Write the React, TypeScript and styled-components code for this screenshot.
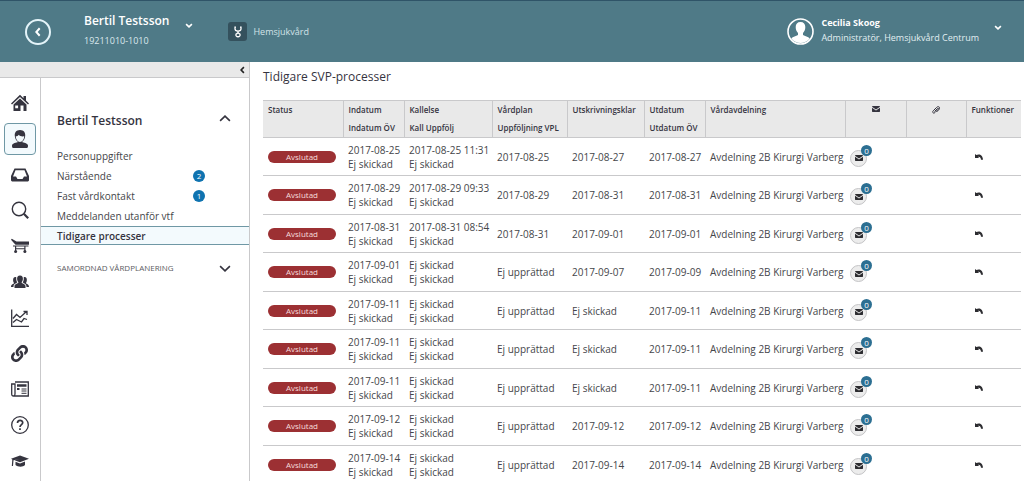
import React from 'react';
import styled, { createGlobalStyle, css } from 'styled-components';
import { FaLink } from 'react-icons/fa';

const GlobalStyle = createGlobalStyle`
  *, *::before, *::after { box-sizing: border-box; }
  body { margin: 0; background: #fff; color: #45464a; font: 10px/14px "Open Sans", "Noto Sans", sans-serif; }
  button { font: inherit; color: inherit; padding: 0; border: 0; background: none; cursor: pointer; }
  a { color: inherit; text-decoration: none; }
  svg { display: block; flex: none; }
`;

const Page = styled.div`
  display: flex;
  flex-direction: column;
  height: 100vh;
  overflow: hidden;
`;

const Header = styled.header`
  display: flex;
  align-items: center;
  flex: none;
  height: 62px;
  padding: 0 22px 0 25px;
  color: #fff;
  background: #4f7a87;
  border-top: 1px solid #2f5468;
`;

const BackButton = styled.button`
  display: grid;
  place-items: center;
  width: 26px;
  height: 26px;
  border: 2px solid #e4f4f9;
  border-radius: 50%;
`;

const Patient = styled.button`
  display: flex;
  align-items: flex-start;
  gap: 16px;
  margin-left: 33px;
  padding-bottom: 4px;
  text-align: left;
  > svg { margin-top: 13px; }
`;

const PatientName = styled.strong`
  display: block;
  font-size: 12px;
  line-height: 22px;
  font-weight: 600;
`;

const PatientId = styled.span`
  display: block;
  font-size: 9px;
  line-height: 18px;
  color: #dbe9ed;
`;

const Unit = styled.div`
  display: flex;
  align-items: center;
  gap: 6px;
  margin-left: 35px;
  font-size: 9px;
  color: #d3e3e8;
`;

const UnitIcon = styled.span`
  display: grid;
  place-items: center;
  width: 19px;
  height: 19px;
  border-radius: 3px;
  color: #fff;
  background: #34515d;
`;

const Account = styled.button`
  display: flex;
  align-items: center;
  gap: 7px;
  margin-left: auto;
  text-align: left;
  > svg:last-child { margin-bottom: 8px; }
`;

const AccountText = styled.span`
  font-size: 9px;
  line-height: 15px;
  margin-right: 8px;
  padding-bottom: 4px;
  color: #e2eef1;
  strong { display: block; color: #fff; }
`;

const Body = styled.div`
  display: flex;
  flex: 1;
  min-height: 0;
`;

const Sidebar = styled.aside`
  display: flex;
  flex-direction: column;
  flex: none;
  width: 250px;
  border-right: 1px solid #c9c9cb;
`;

const CollapseBar = styled.div`
  display: flex;
  justify-content: flex-end;
  align-items: center;
  flex: none;
  height: 16px;
  padding-right: 4px;
  color: #222;
  background: #e9e9e9;
  border-bottom: 1px solid #c9c9cb;
`;

const SideContent = styled.div`
  display: flex;
  flex: 1;
  min-height: 0;
`;

const Rail = styled.nav`
  display: flex;
  flex-direction: column;
  justify-content: space-between;
  align-items: center;
  flex: none;
  width: 41px;
  padding: 9px 1px 4px 0;
  border-right: 1px solid #c9c9cb;
`;

const RailButton = styled.button<{ $active?: boolean }>`
  display: grid;
  place-items: center;
  width: 32px;
  height: 32px;
  color: #35343f;
  border: 1px solid transparent;
  border-radius: 4px;
  ${p => p.$active && css`
    border-color: #6f98a5;
    background: #f3fafd;
  `}
`;

const Menu = styled.nav`
  flex: 1;
  padding-top: 30px;
`;

const MenuHeading = styled.button<{ $sub?: boolean }>`
  display: flex;
  align-items: center;
  justify-content: space-between;
  width: 100%;
  padding: 0 18px 0 16px;
  color: #35343f;
  font-size: 12px;
  line-height: 26px;
  font-weight: 600;
  ${p => !p.$sub && css`
    svg { margin-bottom: 6px; }
  `}
  ${p => p.$sub && css`
    margin-top: 10px;
    font-size: 8px;
    font-weight: 400;
    color: #5c5c63;
    svg { color: #35343f; }
  `}
`;

const MenuList = styled.ul`
  list-style: none;
  margin: 12px 0 0;
  padding: 0;
`;

const MenuLink = styled.a<{ $active?: boolean }>`
  display: flex;
  align-items: center;
  justify-content: space-between;
  height: 20px;
  padding: 0 44px 0 16px;
  ${p => p.$active && css`
    height: 19px;
    font-weight: 600;
    color: #35343f;
    background: #f3fafd;
    border: solid #6f98a5;
    border-width: 1px 0;
  `}
`;

const Count = styled.span`
  width: 12px;
  height: 12px;
  border-radius: 50%;
  color: #fff;
  background: #0f73b0;
  font-size: 8px;
  line-height: 12px;
  text-align: center;
`;

const Main = styled.main`
  flex: 1;
  min-width: 0;
  padding: 5px 3px 0 13px;
`;

const Title = styled.h1`
  margin: 0 0 13px;
  font-size: 12px;
  line-height: 20px;
  font-weight: 400;
  color: #35343f;
`;

const Table = styled.table`
  width: 100%;
  table-layout: fixed;
  border-collapse: collapse;
  white-space: nowrap;
`;

const HeadCell = styled.th`
  height: 36px;
  padding: 0 5px;
  vertical-align: top;
  text-align: left;
  font-size: 8px;
  line-height: 18px;
  font-weight: 600;
  color: #35343f;
  background: #e9e9e9;
  border: 1px solid #c9c9cb;
  &:first-child { border-left: 0; }
  &:last-child { border-right: 0; }
  svg { margin: 5px auto 0; }
`;

const Row = styled.tr`
  height: 38px;
  border-bottom: 1px solid #c9c9cb;
  &:nth-child(even) { height: 39px; }
`;

const Cell = styled.td`
  padding: 0 5px;
  font-size: 10px;
  line-height: 14px;
`;

const StatusPill = styled.span`
  display: block;
  max-width: 68px;
  height: 12px;
  border-radius: 6px;
  color: #f6dcdc;
  background: #9c3033;
  font-size: 8px;
  line-height: 12px;
  text-align: center;
`;

const MailButton = styled.button`
  position: relative;
  display: grid;
  place-items: center;
  width: 17px;
  height: 17px;
  margin-top: 3px;
  color: #2c2c30;
  background: #ececec;
  border: 1px solid #c4c4c6;
  border-radius: 50%;
`;

const MailBadge = styled.span`
  position: absolute;
  top: -6px;
  right: -6px;
  width: 11px;
  height: 11px;
  border-radius: 50%;
  color: #fff;
  background: #2c6f92;
  font-size: 8px;
  line-height: 11px;
`;

const UndoButton = styled.button`
  display: block;
  margin-left: 4px;
  color: #2c2c30;
`;

type ChevronProps = { dir: 'up' | 'down' | 'left'; w: number; h: number; stroke?: number };
const Chevron = ({ dir, w, h, stroke = 1.6 }: ChevronProps) => {
  const i = stroke / 2 + 0.3;
  const d = {
    up: `M${i} ${h - i}L${w / 2} ${i}L${w - i} ${h - i}`,
    down: `M${i} ${i}L${w / 2} ${h - i}L${w - i} ${i}`,
    left: `M${w - i} ${i}L${i} ${h / 2}L${w - i} ${h - i}`,
  }[dir];
  return <svg width={w} height={h} fill="none" stroke="currentColor" strokeWidth={stroke}><path d={d} /></svg>;
};

const Mail = ({ size = 8 }: { size?: number }) => (
  <svg width={size} height={size * 0.75} viewBox="0 0 16 12" fill="currentColor">
    <path d="M1 0h14l1 1.500L8 7 0 1.500zM0 3.500l8 5.300 8-5.300V11l-1 1H1l-1-1z" />
  </svg>
);

const Undo = () => (
  <svg width="8" height="6" viewBox="0 0 16 12" fill="currentColor">
    <path d="M0 0l2.500 2.200C8-1 15.500 1 16 11.500h-4C11.800 7.500 9 5 6 5.800L8.500 8H0z" />
  </svg>
);

const Clip = () => (
  <svg width="8" height="8" viewBox="0 0 16 16" fill="none" stroke="currentColor" strokeWidth="2">
    <path d="M5 11l6-6c1.500-1.500 3 0 1.500 1.500L6 13c-3 3-6.500-.5-3.500-3.500L9 3c4-4 8.500 0 5 4l-5 5" />
  </svg>
);

const Avatar = () => (
  <svg width="27" height="27" viewBox="0 0 27 27">
    <circle cx="13.500" cy="13.500" r="12.500" fill="none" stroke="#fff" strokeWidth="1.600" />
    <path fill="#fff" d="M13.500 4c3.200 0 4.800 2.100 4.800 5 0 2.700-.9 4.600-2.300 6v2c1.800 1.200 5.200 1.500 6.700 3.400a11.500 11.500 0 0 1-18.400 0c1.500-1.900 4.900-2.200 6.700-3.400v-2c-1.400-1.400-2.300-3.300-2.300-6 0-2.900 1.600-5 4.800-5z" />
  </svg>
);

const Stethoscope = () => (
  <svg width="10" height="12" viewBox="0 0 10 12" fill="none" stroke="currentColor" strokeWidth="1.300">
    <path d="M3 1.200H2v1.600C2 6 8 6 8 2.800V1.200H7M5 5.200v1.600L3 8.200c-1 3.400 5 3.400 4 0L5 6.800" />
  </svg>
);

const S = ({ children, line }: { children: React.ReactNode; line?: boolean }) => (
  <svg width="18" height="18" viewBox="0 0 18 18" fill={line ? 'none' : 'currentColor'} stroke={line ? 'currentColor' : 'none'} strokeWidth="1.300">
    {children}
  </svg>
);

const railItems: { label: string; icon: React.ReactNode }[] = [
  { label: 'Hem', icon: <S><path d="M9 .8l3.500 3.400V2H15v4.600l3 3-1 1L9 3 1 10.600l-1-1z" /><path fillRule="evenodd" d="M9 4.500l6.500 6V17h-3v-5.500H9.500V17h-7v-6.500zM4.200 11.500v2.800h2.900v-2.800z" /></S> },
  { label: 'Patient', icon: <S><path fillRule="evenodd" d="M9 0c4 0 5.600 2.800 5.200 6-.2 3-1.800 5.200-3.200 5.900 1.500.9 5.500.8 6 3.500.2 1.600-.6 2.600-1.600 2.600H2.600C1.600 18 .8 17 1 15.400c.5-2.700 4.500-2.600 6-3.500C5.600 11.200 4 9 3.800 6 3.400 2.800 5 0 9 0zM4.800 6.300c0 3 2 5.700 4.200 5.700s4.200-2.700 4.200-5.700c-2.500.4-4.500-.3-5.500-1.600-.7 1-1.700 1.500-2.900 1.600z" /></S> },
  { label: 'Inkorg', icon: <S><path fillRule="evenodd" d="M3.500 2.500h11L18 10v4.500l-1 1H1l-1-1V10zM4.500 4.200L2 10.500h3L6.500 13h5l1.500-2.500h3l-2.500-6.300z" /></S> },
  { label: 'Sök', icon: <S line><circle cx="8" cy="8" r="6.700" strokeWidth="1.400" /><path strokeWidth="2.200" d="M12.800 12.800l4.400 4.400" /></S> },
  { label: 'Vårdplats', icon: <S><path d="M0 2.800l.8-1L5.500 4.500H18v3.200H4.500zM2 8.600h15.500v1H2zM4 9.500h1.200V14H4zM13.300 9.500h1.200V14h-1.200zM5 11.300h8.500v1H5z" /><circle cx="4.600" cy="14.500" r="1.500" /><circle cx="13.900" cy="14.500" r="1.500" /></S> },
  { label: 'Grupper', icon: <S><path d="M9 2.500c2.200 0 2.900 1.500 2.900 3.300S11 9 10.600 9.400c.3 1.200 3.700 1.200 3.900 3.600V15h-11v-2c.2-2.400 3.600-2.400 3.900-3.600C7 9 6.100 7.600 6.100 5.800S6.800 2.500 9 2.500z" /><path d="M4.300 4c.8 0 1 .3 1 .3-.3 2.500.2 4 1 5.300-1 .9-3.800 1.200-3.800 4.400H0c0-3 2.700-2.800 3-4-1.200-1.500-1.500-6 1.300-6zM13.700 4c-.8 0-1 .3-1 .3.3 2.500-.2 4-1 5.300 1 .9 3.800 1.200 3.800 4.400H18c0-3-2.700-2.800-3-4 1.200-1.500 1.500-6-1.300-6z" /></S> },
  { label: 'Statistik', icon: <S line><path d="M.7.5v16.800H18M2 9.500l3.500-4 3.500 3 6.500-6M12.500 2.500H16V6M2 13.500l3.500-3 5 2.500 2.500-3.500 3 1" /></S> },
  { label: 'Länkar', icon: <FaLink size={17} /> },
  { label: 'Nyheter', icon: <S line><path d="M4 2h13.300v14H2.500C1.300 16 .7 15.300.7 14V4H4v10c0 1.200-.6 2-1.500 2" /><path strokeWidth="2.500" d="M6 5.500h9.500" /><path d="M10.500 9h5M10.500 11h5M10.500 13.300h5" strokeWidth="1" /><path d="M6 9h2.500" strokeWidth="2" /></S> },
  { label: 'Hjälp', icon: <S line><circle cx="9" cy="9" r="8.300" /><path strokeWidth="1.700" d="M6.500 7c0-3.400 5.200-3.300 5.200-.3C11.700 8.600 9 8.700 9 11M9 12.300v1.800" /></S> },
  { label: 'Utbildning', icon: <S><path d="M9 3.500l9 3.300-9 3.400-5.500-2L9 7 2.500 8.300 2 14H.8L1.300 7.500 0 6.800zM4.500 9.800L9 11.500l5-1.900v3.500c-2 2.300-7 2.300-9.500 0z" /></S> },
];

const menuItems: { label: string; count?: number; active?: boolean }[] = [
  { label: 'Personuppgifter' },
  { label: 'Närstående', count: 2 },
  { label: 'Fast vårdkontakt', count: 1 },
  { label: 'Meddelanden utanför vtf' },
  { label: 'Tidigare processer', active: true },
];

const columns: { width?: number; head: React.ReactNode }[] = [
  { width: 80, head: 'Status' },
  { width: 61, head: <>Indatum<br />Indatum ÖV</> },
  { width: 88, head: <>Kallelse<br />Kall Uppfölj</> },
  { width: 75, head: <>Vårdplan<br />Uppföljning VPL</> },
  { width: 77, head: 'Utskrivningsklar' },
  { width: 61, head: <>Utdatum<br />Utdatum ÖV</> },
  { head: 'Vårdavdelning' },
  { width: 61, head: <Mail /> },
  { width: 60, head: <Clip /> },
  { width: 55, head: 'Funktioner' },
];

const none = 'Ej skickad';
const rows = [
  ['2017-08-25', '2017-08-25 11:31', '2017-08-25', '2017-08-27', '2017-08-27'],
  ['2017-08-29', '2017-08-29 09:33', '2017-08-29', '2017-08-31', '2017-08-31'],
  ['2017-08-31', '2017-08-31 08:54', '2017-08-31', '2017-09-01', '2017-09-01'],
  ['2017-09-01', none, 'Ej upprättad', '2017-09-07', '2017-09-09'],
  ['2017-09-11', none, 'Ej upprättad', none, '2017-09-11'],
  ['2017-09-11', none, 'Ej upprättad', none, '2017-09-11'],
  ['2017-09-11', none, 'Ej upprättad', none, '2017-09-11'],
  ['2017-09-12', none, 'Ej upprättad', '2017-09-12', '2017-09-12'],
  ['2017-09-14', none, 'Ej upprättad', '2017-09-14', '2017-09-14'],
];

export default function App() {
  return (
    <Page>
      <GlobalStyle />
      <Header>
        <BackButton aria-label="Tillbaka"><Chevron dir="left" w={6} h={10} stroke={2} /></BackButton>
        <Patient>
          <span>
            <PatientName>Bertil Testsson</PatientName>
            <PatientId>19211010-1010</PatientId>
          </span>
          <Chevron dir="down" w={8} h={5} />
        </Patient>
        <Unit><UnitIcon><Stethoscope /></UnitIcon>Hemsjukvård</Unit>
        <Account>
          <Avatar />
          <AccountText><strong>Cecilia Skoog</strong>Administratör, Hemsjukvård Centrum</AccountText>
          <Chevron dir="down" w={8} h={5} />
        </Account>
      </Header>
      <Body>
        <Sidebar>
          <CollapseBar><button aria-label="Dölj meny"><Chevron dir="left" w={5} h={8} /></button></CollapseBar>
          <SideContent>
            <Rail>
              {railItems.map((item, i) => (
                <RailButton key={item.label} aria-label={item.label} $active={i === 1}>{item.icon}</RailButton>
              ))}
            </Rail>
            <Menu>
              <MenuHeading>Bertil Testsson<Chevron dir="up" w={12} h={7} /></MenuHeading>
              <MenuList>
                {menuItems.map(item => (
                  <li key={item.label}>
                    <MenuLink href="#" $active={item.active}>
                      {item.label}
                      {item.count && <Count>{item.count}</Count>}
                    </MenuLink>
                  </li>
                ))}
              </MenuList>
              <MenuHeading $sub>SAMORDNAD VÅRDPLANERING<Chevron dir="down" w={12} h={7} /></MenuHeading>
            </Menu>
          </SideContent>
        </Sidebar>
        <Main>
          <Title>Tidigare SVP-processer</Title>
          <Table>
            <colgroup>{columns.map((c, i) => <col key={i} width={c.width} />)}</colgroup>
            <thead><tr>{columns.map((c, i) => <HeadCell key={i} scope="col">{c.head}</HeadCell>)}</tr></thead>
            <tbody>
              {rows.map(([start, call, plan, ready, end], i) => (
                <Row key={i}>
                  <Cell><StatusPill>Avslutad</StatusPill></Cell>
                  <Cell>{start}<br />{none}</Cell>
                  <Cell>{call}<br />{none}</Cell>
                  <Cell>{plan}</Cell>
                  <Cell>{ready}</Cell>
                  <Cell>{end}</Cell>
                  <Cell>Avdelning 2B Kirurgi Varberg</Cell>
                  <Cell><MailButton aria-label="Meddelanden"><Mail /><MailBadge>0</MailBadge></MailButton></Cell>
                  <Cell />
                  <Cell><UndoButton aria-label="Återöppna"><Undo /></UndoButton></Cell>
                </Row>
              ))}
            </tbody>
          </Table>
        </Main>
      </Body>
    </Page>
  );
}
